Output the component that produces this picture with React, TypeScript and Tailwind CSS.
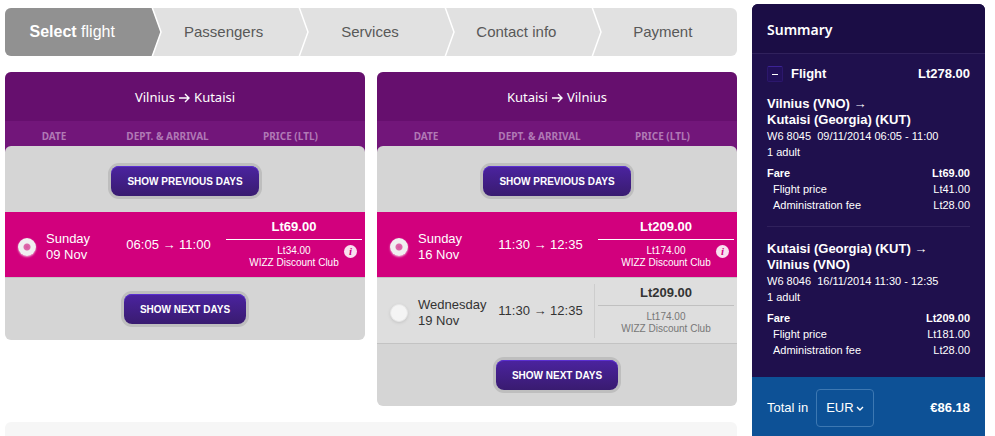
import { useState } from "react";

type Flight = {
  id: string;
  day: string;
  date: string;
  times: string;
  price: string;
  clubPrice: string;
};

type Leg = {
  route: string[];
  flight: string;
  schedule: string;
  total: string;
  items: { name: string; price: string }[];
};

const steps = ["Passengers", "Services", "Contact info", "Payment"];

const outbound: Flight[] = [
  { id: "out-09", day: "Sunday", date: "09 Nov", times: "06:05 → 11:00", price: "Lt69.00", clubPrice: "Lt34.00" },
];

const inbound: Flight[] = [
  { id: "in-16", day: "Sunday", date: "16 Nov", times: "11:30 → 12:35", price: "Lt209.00", clubPrice: "Lt174.00" },
  { id: "in-19", day: "Wednesday", date: "19 Nov", times: "11:30 → 12:35", price: "Lt209.00", clubPrice: "Lt174.00" },
];

const legs: Leg[] = [
  {
    route: ["Vilnius (VNO) →", "Kutaisi (Georgia) (KUT)"],
    flight: "W6 8045",
    schedule: "09/11/2014 06:05 - 11:00",
    total: "Lt69.00",
    items: [
      { name: "Flight price", price: "Lt41.00" },
      { name: "Administration fee", price: "Lt28.00" },
    ],
  },
  {
    route: ["Kutaisi (Georgia) (KUT) →", "Vilnius (VNO)"],
    flight: "W6 8046",
    schedule: "16/11/2014 11:30 - 12:35",
    total: "Lt209.00",
    items: [
      { name: "Flight price", price: "Lt181.00" },
      { name: "Administration fee", price: "Lt28.00" },
    ],
  },
];

function StepArrow({ fill }: { fill: string }) {
  return (
    <svg width="12" height="48" viewBox="0 0 12 48" className="shrink-0" aria-hidden="true">
      <path d="M0 0H1L10 24L1 48H0Z" fill={fill} />
      <path d="M1 -1L10 24L1 49" fill="none" stroke="#fff" strokeWidth="1.5" />
    </svg>
  );
}

function Steps() {
  return (
    <ol className="flex h-12 overflow-hidden rounded-md bg-[#e1e1e1] text-[15px] text-[#585858]">
      <li className="flex w-1/5 items-center justify-center bg-[#919191] pr-3 text-base text-white">
        <span>
          <b>Select</b> flight
        </span>
      </li>
      {steps.map((step, i) => (
        <li key={step} className="flex w-1/5 items-center">
          <StepArrow fill={i === 0 ? "#919191" : "#e1e1e1"} />
          <span className="flex-1 pr-3.5 text-center">{step}</span>
        </li>
      ))}
    </ol>
  );
}

function DaysButton({ children }: { children: string }) {
  return (
    <button
      type="button"
      className="h-[30px] rounded-lg bg-linear-to-b from-[#4b23a0] to-[#391b70] px-4 text-[10px] font-bold text-white shadow-[0_0_0_3px_#bebebe,inset_0_1px_0_#5a2fd0]"
    >
      {children}
    </button>
  );
}

function FlightRow({
  flight,
  group,
  selected,
  onSelect,
}: {
  flight: Flight;
  group: string;
  selected: boolean;
  onSelect: () => void;
}) {
  return (
    <tr className={selected ? "bg-[#d2007d] text-white" : "bg-[#dedede] text-[#333]"}>
      <td className="border-b border-[#c3c3c3] p-0 align-middle">
        <label className="flex items-center gap-2.5 pt-1 pl-[13px] text-[13px] leading-4">
          <input
            type="radio"
            name={group}
            checked={selected}
            onChange={onSelect}
            className={
              selected
                ? "size-[18px] shrink-0 appearance-none rounded-full bg-[radial-gradient(circle,#d8559f_0,#dd6bab_3px,#f0f0f0_4px)] shadow-[0_1px_2px_#ffffffaa]"
                : "size-[18px] shrink-0 appearance-none rounded-full border border-[#e6e6e6] bg-[#f4f4f4] shadow-[0_1px_3px_#c4c4c4]"
            }
          />
          <span>
            {flight.day}
            <br />
            {flight.date}
          </span>
        </label>
      </td>
      <td className="border-b border-[#c3c3c3] p-0 text-center align-middle text-[13px] leading-4 whitespace-nowrap">
        {flight.times}
      </td>
      <td className="border-b border-[#c3c3c3] p-0 pt-1.5 pb-[5px] align-top">
        <div
          className={
            selected
              ? "border-l border-transparent pr-[3px] pb-[3px] pl-[3px]"
              : "border-l border-[#cdcdcd] pr-[3px] pb-[3px] pl-[3px]"
          }
        >
          <p
            className={
              selected
                ? "border-b border-white pt-px pb-1 text-center text-[13px] leading-4 font-bold"
                : "border-b border-[#c0c0c0] pt-px pb-1 text-center text-[13px] leading-4 font-bold"
            }
          >
            {flight.price}
          </p>
          <div className="relative pt-[5px] text-center text-[10px] leading-3">
            <p className={selected ? "text-white" : "text-[#777]"}>
              {flight.clubPrice}
              <br />
              WIZZ Discount Club
            </p>
            {selected && (
              <button
                type="button"
                aria-label="Discount Club information"
                className="absolute top-[5px] right-[5px] flex size-[13px] items-center justify-center rounded-full bg-[#f9e0ef] font-[Liberation_Serif,serif] text-[11px] leading-none font-bold text-[#d2007d] italic"
              >
                i
              </button>
            )}
          </div>
        </div>
      </td>
    </tr>
  );
}

function FlightPanel({ from, to, group, flights }: { from: string; to: string; group: string; flights: Flight[] }) {
  const [selected, setSelected] = useState(flights[0].id);
  return (
    <section className="flex-1 overflow-hidden rounded-md bg-[#d5d5d5]">
      <h2 className="flex h-[49px] items-center justify-center gap-1 bg-[#660f6e] pt-0.5 font-[Noto_Sans,sans-serif] text-[13px] text-white">
        {from}
        <svg width="11" height="10" viewBox="0 0 11 10" fill="none" stroke="currentColor" strokeWidth="1.4" role="img" aria-label="to">
          <path d="M0 5H10M6 1L10 5L6 9" />
        </svg>
        {to}
      </h2>
      <table className="w-full table-fixed border-separate border-spacing-0">
        <thead className="bg-[#72167a] font-[Noto_Sans,sans-serif] text-[10px] leading-4 text-[#b079b5]">
          <tr className="h-[25px]">
            <th className="w-[110px] p-0 pt-1 pr-3">DATE</th>
            <th className="w-[107px] p-0 pt-1 pr-0.5">DEPT. &amp; ARRIVAL</th>
            <th className="p-0 pt-1 pr-1.5">PRICE (LTL)</th>
          </tr>
        </thead>
        <tbody>
          <tr>
            <td colSpan={3} className="bg-[#72167a] p-0">
              <div className="flex justify-center rounded-t-md bg-[#d5d5d5] pt-5 pb-4">
                <DaysButton>SHOW PREVIOUS DAYS</DaysButton>
              </div>
            </td>
          </tr>
          {flights.map((flight) => (
            <FlightRow
              key={flight.id}
              flight={flight}
              group={group}
              selected={flight.id === selected}
              onSelect={() => setSelected(flight.id)}
            />
          ))}
        </tbody>
      </table>
      <div className="flex justify-center py-4">
        <DaysButton>SHOW NEXT DAYS</DaysButton>
      </div>
    </section>
  );
}

function LegSummary({ leg }: { leg: Leg }) {
  return (
    <div className="text-[11px] leading-4">
      <h4 className="text-[13px] leading-4 font-bold">
        {leg.route[0]}
        <br />
        {leg.route[1]}
      </h4>
      <p className="whitespace-nowrap">
        {leg.flight}&nbsp; {leg.schedule}
      </p>
      <p>1 adult</p>
      <dl className="mt-[5px]">
        <div className="flex justify-between font-bold">
          <dt>Fare</dt>
          <dd>{leg.total}</dd>
        </div>
        {leg.items.map((item) => (
          <div key={item.name} className="flex justify-between pl-1.5">
            <dt>{item.name}</dt>
            <dd>{item.price}</dd>
          </div>
        ))}
      </dl>
    </div>
  );
}

function Summary() {
  return (
    <aside className="mt-1 w-[233px] shrink-0 overflow-hidden rounded-t-md bg-[#1f104d] text-white">
      <h2 className="flex h-[50px] items-center border-b border-[#30215c] bg-[#1b0d45] px-[15px] pt-0.5 font-[Noto_Sans,sans-serif] text-sm font-semibold">
        Summary
      </h2>
      <div className="px-[15px] pb-[19px]">
        <div className="flex items-center pt-3 pb-3.5 text-[13px] leading-4 font-bold">
          <button
            type="button"
            aria-label="Collapse flight"
            className="flex size-4 items-center justify-center rounded-xs border border-[#2c176c] border-t-[#3c2396] bg-[#22105a]"
          >
            <span className="h-px w-1.5 bg-white" />
          </button>
          <h3 className="flex-1 pl-2">Flight</h3>
          <span>Lt278.00</span>
        </div>
        <LegSummary leg={legs[0]} />
        <hr className="mt-[13px] mb-3.5 border-[#30215c]" />
        <LegSummary leg={legs[1]} />
      </div>
      <div className="flex items-center bg-[#0d5196] px-[15px] pt-3 pb-[9px] text-[13px]">
        <label htmlFor="currency">Total in</label>
        <div className="relative ml-2">
          <select
            id="currency"
            defaultValue="EUR"
            className="h-[38px] w-[58px] appearance-none rounded-sm border border-[#3d78b2] bg-transparent pl-[9px] text-[13px] text-white"
          >
            <option>EUR</option>
            <option>LTL</option>
          </select>
          <svg
            width="8"
            height="6"
            viewBox="0 0 8 6"
            fill="none"
            stroke="currentColor"
            strokeWidth="1.4"
            className="pointer-events-none absolute top-[17px] right-2.5"
            aria-hidden="true"
          >
            <path d="M1 1L4 4L7 1" />
          </svg>
        </div>
        <span className="flex-1 text-right font-bold">€86.18</span>
      </div>
    </aside>
  );
}

export default function App() {
  return (
    <div className="flex gap-[15px] bg-white pr-2.5 pl-[5px] font-[Liberation_Sans,Arial,sans-serif]">
      <main className="flex flex-1 flex-col gap-4 pt-2">
        <Steps />
        <div className="flex items-start gap-3">
          <FlightPanel from="Vilnius" to="Kutaisi" group="outbound" flights={outbound} />
          <FlightPanel from="Kutaisi" to="Vilnius" group="inbound" flights={inbound} />
        </div>
        <div className="min-h-3.5 flex-1 rounded-t-md bg-[#f6f6f6]" />
      </main>
      <Summary />
    </div>
  );
}
